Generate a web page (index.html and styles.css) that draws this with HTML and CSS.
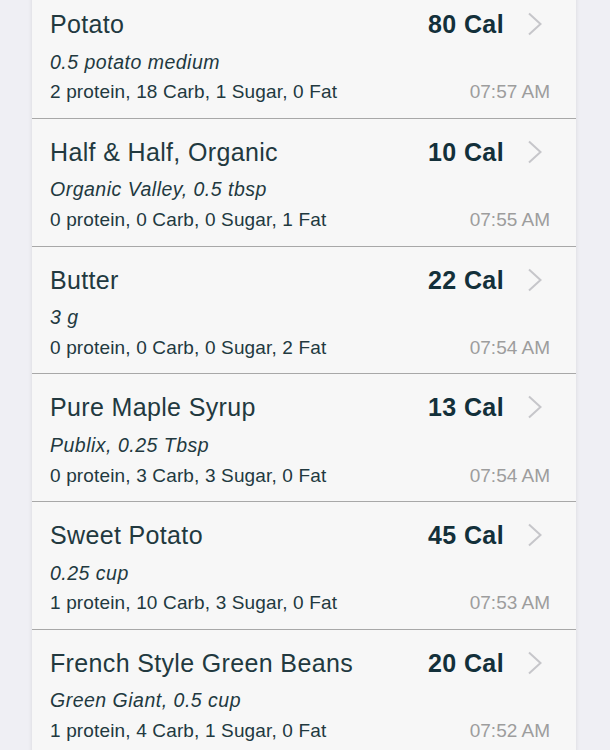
FILE: index.html
```html
<!DOCTYPE html>
<html lang="en">
<head>
  <meta charset="UTF-8">
  <meta name="viewport" content="width=device-width, initial-scale=1.0">
  <title>Food Log</title>
  <link rel="stylesheet" href="styles.css">
</head>
<body>
  <div class="food-list">
    <div class="food-item">
      <div class="item-top">
        <span class="item-name">Potato</span>
        <span class="item-cal">80 Cal</span>
        <svg class="chevron" viewBox="0 0 16 24"><path d="M2 1.5 L13.5 12 L2 22.5"/></svg>
      </div>
      <div class="item-serving">0.5 potato medium</div>
      <div class="item-bottom">
        <span class="item-macros">2 protein, 18 Carb, 1 Sugar, 0 Fat</span>
        <span class="item-time">07:57 AM</span>
      </div>
    </div>

    <div class="food-item">
      <div class="item-top">
        <span class="item-name">Half &amp; Half, Organic</span>
        <span class="item-cal">10 Cal</span>
        <svg class="chevron" viewBox="0 0 16 24"><path d="M2 1.5 L13.5 12 L2 22.5"/></svg>
      </div>
      <div class="item-serving">Organic Valley, 0.5 tbsp</div>
      <div class="item-bottom">
        <span class="item-macros">0 protein, 0 Carb, 0 Sugar, 1 Fat</span>
        <span class="item-time">07:55 AM</span>
      </div>
    </div>

    <div class="food-item">
      <div class="item-top">
        <span class="item-name">Butter</span>
        <span class="item-cal">22 Cal</span>
        <svg class="chevron" viewBox="0 0 16 24"><path d="M2 1.5 L13.5 12 L2 22.5"/></svg>
      </div>
      <div class="item-serving">3 g</div>
      <div class="item-bottom">
        <span class="item-macros">0 protein, 0 Carb, 0 Sugar, 2 Fat</span>
        <span class="item-time">07:54 AM</span>
      </div>
    </div>

    <div class="food-item">
      <div class="item-top">
        <span class="item-name">Pure Maple Syrup</span>
        <span class="item-cal">13 Cal</span>
        <svg class="chevron" viewBox="0 0 16 24"><path d="M2 1.5 L13.5 12 L2 22.5"/></svg>
      </div>
      <div class="item-serving">Publix, 0.25 Tbsp</div>
      <div class="item-bottom">
        <span class="item-macros">0 protein, 3 Carb, 3 Sugar, 0 Fat</span>
        <span class="item-time">07:54 AM</span>
      </div>
    </div>

    <div class="food-item">
      <div class="item-top">
        <span class="item-name">Sweet Potato</span>
        <span class="item-cal">45 Cal</span>
        <svg class="chevron" viewBox="0 0 16 24"><path d="M2 1.5 L13.5 12 L2 22.5"/></svg>
      </div>
      <div class="item-serving">0.25 cup</div>
      <div class="item-bottom">
        <span class="item-macros">1 protein, 10 Carb, 3 Sugar, 0 Fat</span>
        <span class="item-time">07:53 AM</span>
      </div>
    </div>

    <div class="food-item">
      <div class="item-top">
        <span class="item-name">French Style Green Beans</span>
        <span class="item-cal">20 Cal</span>
        <svg class="chevron" viewBox="0 0 16 24"><path d="M2 1.5 L13.5 12 L2 22.5"/></svg>
      </div>
      <div class="item-serving">Green Giant, 0.5 cup</div>
      <div class="item-bottom">
        <span class="item-macros">1 protein, 4 Carb, 1 Sugar, 0 Fat</span>
        <span class="item-time">07:52 AM</span>
      </div>
    </div>
  </div>
</body>
</html>
```

FILE: styles.css
```css
body {
  margin: 0;
  background: #efeff4;
  font-family: 'Liberation Sans', Arial, sans-serif;
  color: #22393f;
  overflow: hidden;
}

.food-list {
  width: 544px;
  margin: -9px 0 0 32px;
  background: #f7f7f7;
  box-shadow: 0 0 4px rgba(0, 0, 0, 0.1);
}

.food-item {
  height: 126.75px;
  box-sizing: content-box;
  padding: 0 26px 0 18px;
  border-bottom: 1px solid #a8a8a8;
  display: flex;
  flex-direction: column;
}

.item-top {
  display: flex;
  align-items: center;
  margin-top: 18px;
  height: 30px;
}

.item-name {
  flex: 1;
  font-size: 25px;
  letter-spacing: 0.35px;
  line-height: 30px;
}

.item-cal {
  font-size: 25px;
  font-weight: bold;
  letter-spacing: 0.4px;
  line-height: 30px;
  color: #13303a;
}

.chevron {
  width: 16px;
  height: 24px;
  margin: 0 7px 0 23px;
  fill: none;
  stroke: #c6c6ca;
  stroke-width: 2;
}

.item-serving {
  margin-top: 9.5px;
  font-size: 19.5px;
  font-style: italic;
  letter-spacing: 0.5px;
  line-height: 26px;
}

.item-bottom {
  display: flex;
  justify-content: space-between;
  margin-top: 4.8px;
  font-size: 19px;
  line-height: 26px;
}

.item-macros {
  letter-spacing: 0.15px;
}

.item-time {
  color: #9d9d9d;
}
```
